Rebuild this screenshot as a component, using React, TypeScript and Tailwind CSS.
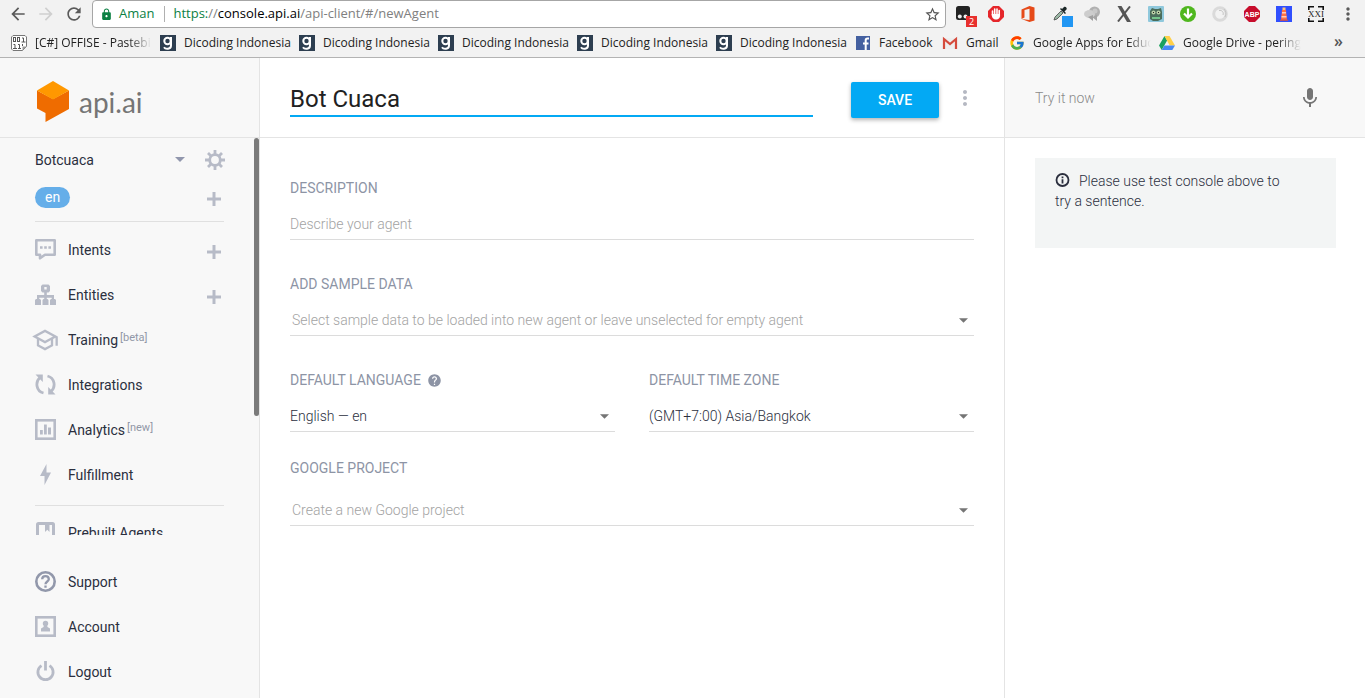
import React, { useState } from 'react';
import { FcGoogle } from 'react-icons/fc';
import {
  MdArrowBack,
  MdArrowForward,
  MdHelp,
  MdLock,
  MdMic,
  MdMoreVert,
  MdOutlineSchool,
  MdRefresh,
  MdStarBorder,
} from 'react-icons/md';

/* Browser icons */

const PastebinIcon = () => (
  <svg viewBox="0 0 16 16" className="size-4 shrink-0">
    <path d="M2 .5h12l1.500 1.500v9.500l-4 4H2L.5 14V2z" fill="#fff" stroke="#777" />
    <path d="M11.500 15.500v-4h4z" fill="#999" />
    <g fill="none" stroke="#555">
      <rect x="2.500" y="2.500" width="2" height="4" />
      <rect x="6.500" y="2.500" width="2" height="4" />
      <path d="M11 3h1.500v4M10.500 7h4M2.500 9.500H4V13M2 13.500h4M7 9.500h1.500V13M7 13.500h3M11.500 9v2" />
    </g>
  </svg>
);

const DicodingIcon = () => (
  <svg viewBox="0 0 16 16" className="size-4 shrink-0">
    <path d="M0 0h16v16H0z" fill="#2d3e50" />
    <circle cx="7.500" cy="6" r="3.200" fill="none" stroke="#fff" strokeWidth="2" />
    <path d="M11 2v8.500c0 4-5.500 4.200-7 1.700" fill="none" stroke="#fff" strokeWidth="2" />
  </svg>
);

const FacebookIcon = () => (
  <svg viewBox="0 0 16 16" className="size-4 shrink-0">
    <path d="M1 1h14v14H1z" fill="#4460a0" />
    <path d="M14 3.500h-1.500c-1.200 0-1.800.6-1.800 1.800V15M8 8.500h5.500" fill="none" stroke="#fff" strokeWidth="2" />
  </svg>
);

const GmailIcon = () => (
  <svg viewBox="0 0 16 16" className="size-4 shrink-0">
    <path d="M1 3h14v11H1z" fill="#eee" />
    <path d="M2 14V4l6 5 6-5v10" fill="none" stroke="#d54b3d" strokeWidth="2.200" />
  </svg>
);

const DriveIcon = () => (
  <svg viewBox="0 0 16 16" className="size-4 shrink-0">
    <path d="M5.500 1 0 10.500 2.700 15l5.400-9.500z" fill="#1aa15f" />
    <path d="M5.500 1h5L16 10.500h-5.300z" fill="#ffcf48" />
    <path d="M5.400 10.500H16L13.300 15H2.700z" fill="#4688f4" />
  </svg>
);

const extensions = [
  {
    name: 'Tampermonkey',
    icon: (
      <>
        <rect width="14" height="14" rx="2.500" fill="#222" />
        <circle cx="3.800" cy="10.500" r="2" fill="#eee" />
        <circle cx="9.500" cy="10.500" r="2" fill="#eee" />
      </>
    ),
  },
  {
    name: 'Opera blocker',
    icon: (
      <>
        <path d="M5 0h6l5 5v6l-5 5H5l-5-5V5z" fill="#e5262b" />
        <path d="M4.500 9V5M6.700 8V3M9 8V3M11.200 9V4.500" stroke="#fff" strokeWidth="1.600" strokeLinecap="round" />
        <path d="M3.700 8h8.300c.5 4-1.500 5.500-4 5.500S3.700 12 3.700 8z" fill="#fff" />
      </>
    ),
  },
  {
    name: 'Office',
    icon: (
      <path d="m1.500 3.500 8-3.500 5 1.500v13L9.500 16l-8-3 8 1V2.800L4.500 4v7.500l-3 1.500z" fill="#e64a19" />
    ),
  },
  {
    name: 'Color picker',
    icon: (
      <>
        <path d="m2 14 1-3 6-6 2 2-6 6z" fill="#9bb8a5" stroke="#444" strokeWidth=".8" />
        <path d="m8 3 5 5 1-1-1.500-1.500 2-2c1-1.500-1-3.500-2.500-2.500l-2 2L9 2z" fill="#1b2727" />
      </>
    ),
  },
  {
    name: 'Chat',
    icon: (
      <>
        <circle cx="10.500" cy="6" r="5.500" fill="#b0b0b0" />
        <path d="M13 9v6l-5-4z" fill="#a6a6a6" />
        <ellipse cx="5.500" cy="8" rx="5.500" ry="4" fill="#cdcdcd" />
        <path d="m4 11 5 4V9z" fill="#a0a0a0" />
        <circle cx="11" cy="5" r="2.500" fill="#c8c8c8" />
      </>
    ),
  },
  {
    name: 'X',
    icon: (
      <>
        <path d="M1.500 0h4L15 16h-4z" fill="#555" />
        <path d="M14 .5 2 15.500" stroke="#555" strokeWidth="2" />
      </>
    ),
  },
  {
    name: 'Owl',
    icon: (
      <>
        <rect width="16" height="16" rx="1" fill="#8fc8dc" />
        <path d="M2 13V5l2-3 3 1h3l3-1 1 4v7l-4 2H5z" fill="#4b6d5b" />
        <circle cx="5.500" cy="6.500" r="2" fill="#b9cfa5" />
        <circle cx="10.500" cy="6.500" r="2" fill="#b9cfa5" />
        <path d="M4 11h8v2H4z" fill="#75c58c" />
        <path d="M5 6h1v1H5zM10 6h1v1h-1z" fill="#222" />
      </>
    ),
  },
  {
    name: 'Download',
    icon: (
      <>
        <circle cx="8" cy="8" r="8" fill="#4fb71e" />
        <path d="M8 2.500V11M4 7.500l4 4 4-4" fill="none" stroke="#fff" strokeWidth="2.200" />
      </>
    ),
  },
  {
    name: 'Disc',
    icon: (
      <>
        <circle cx="8" cy="8" r="6.300" fill="none" stroke="#dadada" strokeWidth="3" />
        <path d="M7 4.500c3-.5 5 1.500 4 4.500M12 3c2 2 2.500 5 1 8" fill="none" stroke="#c4c4c4" />
      </>
    ),
  },
  {
    name: 'Adblock Plus',
    icon: (
      <>
        <path d="M5 0h6l5 5v6l-5 5H5l-5-5V5z" fill="#c70d2c" />
        <text x="8" y="11" textAnchor="middle" fill="#fff" className="font-['Liberation_Sans'] text-[7px] font-bold">
          ABP
        </text>
      </>
    ),
  },
  {
    name: 'Lighthouse',
    icon: (
      <>
        <path d="M0 0h16v16H0z" fill="#304ffe" />
        <path d="M6 4h4l1 10H5z" fill="#ff7043" />
        <path d="M6 6h4v1.500H6zM5.500 10h5v1.500h-5z" fill="#ffccbc" />
        <path d="M6.500 1.500h3V4h-3z" fill="#ffc47c" />
        <path d="M4 13.500h8V15H4z" fill="#b75265" />
      </>
    ),
  },
  {
    name: 'XXI',
    icon: (
      <>
        <path d="M6 .8H.8V4M10 .8h5.200V4M.8 12v3.200H6M15.200 12v3.200H10" fill="none" stroke="#111" strokeWidth="1.600" />
        <text x="8" y="11" textAnchor="middle" fill="#222" className="font-['Liberation_Serif'] text-[9px]">
          XXI
        </text>
      </>
    ),
  },
];

const bookmarks = [
  { label: '[C#] OFFISE - Pastebi', icon: <PastebinIcon />, width: 'w-[117px]', fade: true },
  { label: 'Dicoding Indonesia', icon: <DicodingIcon />, width: 'w-[107px]' },
  { label: 'Dicoding Indonesia', icon: <DicodingIcon />, width: 'w-[107px]' },
  { label: 'Dicoding Indonesia', icon: <DicodingIcon />, width: 'w-[107px]' },
  { label: 'Dicoding Indonesia', icon: <DicodingIcon />, width: 'w-[107px]' },
  { label: 'Dicoding Indonesia', icon: <DicodingIcon />, width: 'w-[107px]' },
  { label: 'Facebook', icon: <FacebookIcon />, width: 'w-[55px]' },
  { label: 'Gmail', icon: <GmailIcon />, width: 'w-[35px]' },
  { label: 'Google Apps for Educ', icon: <FcGoogle className="size-4 shrink-0" />, width: 'w-[118px]', fade: true },
  { label: 'Google Drive - pering', icon: <DriveIcon />, width: 'w-[118px]', fade: true },
];

/* Sidebar icons */

const IntentsIcon = () => (
  <svg viewBox="0 0 21 21" className="h-[21px] w-[21px]" fill="none" stroke="currentColor" strokeWidth="2.600">
    <path d="M1.300 1.300h18.400v14.400H10l-5 3.600v-3.600H1.300z" strokeLinejoin="round" />
    <path d="M5 8.500h2.600M9.200 8.500h2.600M13.400 8.500H16" />
  </svg>
);

const EntitiesIcon = () => (
  <svg viewBox="0 0 21 21" className="h-[21px] w-[21px]" fill="currentColor">
    <path fillRule="evenodd" d="M7.500.5h6L15 2v5l-1.500 1.500h-6L6 7V2zM9.300 3v2.500h2.400V3z" />
    <path d="M9.200 8h2.600v8H9.200zM2 11h17v5h-2.300v-2.300H4.300V16H2z" />
    <path d="M1 15h4l1 1v5H0v-5zM8.500 15h4l1 1v5h-6v-5zM16 15h4l1 1v5h-6v-5z" />
  </svg>
);

const IntegrationsIcon = () => (
  <svg viewBox="0 0 21 21" className="h-[21px] w-[21px]" fill="none" stroke="currentColor" strokeWidth="2.800">
    <path d="M8.500 19C1 17 0 8 5 3.500M12.500 2C20 4 21 13 16 17.500" />
    <path d="M.5.500h7.300V8zM20.500 20.500h-7.300V13z" fill="currentColor" stroke="none" />
  </svg>
);

const AnalyticsIcon = () => (
  <svg viewBox="0 0 21 21" className="h-[21px] w-[21px]" fill="currentColor">
    <rect x="1.300" y="1.300" width="18.400" height="18.400" fill="none" stroke="currentColor" strokeWidth="2.600" />
    <path d="M5 11h2.800v4.500H5zM9 5.500h2.800v10H9zM13 8.500h3v7h-3z" />
  </svg>
);

const FulfillmentIcon = () => (
  <svg viewBox="0 0 21 21" className="h-[21px] w-[21px]" fill="currentColor">
    <path d="M11.500 0 5 12h4.500v9L16 8.500h-4.500z" />
  </svg>
);

const PrebuiltIcon = () => (
  <svg viewBox="0 0 21 21" className="h-[21px] w-[21px]" fill="currentColor">
    <rect x="2.500" y="1.500" width="16" height="18" rx="1" fill="none" stroke="currentColor" strokeWidth="3" />
    <path d="M10 2h4.500v8l-2.200-2.200L10 10z" />
  </svg>
);

const SupportIcon = () => (
  <svg viewBox="0 0 21 21" className="h-[21px] w-[21px] text-[#9298ab]" fill="none" stroke="currentColor">
    <circle cx="10.500" cy="10.500" r="9.200" strokeWidth="2.600" />
    <path d="M7.200 8.300c0-4.300 6.600-4.300 6.600 0 0 2.200-3.300 2.300-3.300 4.900M10.500 14.500v2.200" strokeWidth="2.300" />
  </svg>
);

const AccountIcon = () => (
  <svg viewBox="0 0 21 21" className="h-[21px] w-[21px]" fill="currentColor">
    <rect x="1.300" y="1.300" width="18.400" height="18.400" fill="none" stroke="currentColor" strokeWidth="2.600" />
    <circle cx="10.500" cy="7.500" r="2.700" />
    <path d="M9 9h3l.5 2 2.500 1.500v3H6v-3L8.500 11z" />
  </svg>
);

const LogoutIcon = () => (
  <svg viewBox="0 0 21 21" className="h-[21px] w-[21px]" fill="none" stroke="currentColor" strokeWidth="2.800">
    <path d="M10.500 0v9.500M6.500 4.600a7.600 7.600 0 1 0 8 0" />
  </svg>
);

const GearIcon = () => (
  <svg viewBox="-10 -10 20 20" className="size-5" fill="none" stroke="currentColor">
    <circle r="5.300" strokeWidth="2.800" />
    <path
      d="M0-10v4M0 10V6M-10 0h4M10 0H6M-7-7l3 3M7 7 4 4M-7 7l3-3M7-7 4-4"
      strokeWidth="2.800"
    />
  </svg>
);

const InfoIcon = () => (
  <svg viewBox="0 0 16 16" className="mr-2 inline size-4 align-text-bottom" fill="none" stroke="currentColor">
    <circle cx="7.500" cy="7" r="6" strokeWidth="1.800" />
    <path d="M7.500 3.500v1.700M7.500 6.300v4.200" strokeWidth="1.800" />
  </svg>
);

const PlusIcon = () => (
  <svg viewBox="0 0 14 14" className="size-3.5">
    <path d="M7 0v14M0 7h14" stroke="currentColor" strokeWidth="3" />
  </svg>
);

const Caret = ({ className }: { className: string }) => (
  <svg viewBox="0 0 10 5" className={className}>
    <path d="M0 0h10L5 5z" fill="currentColor" />
  </svg>
);

const navItems = [
  { name: 'Intents', icon: <IntentsIcon />, add: true },
  { name: 'Entities', icon: <EntitiesIcon />, add: true },
  { name: 'Training', icon: <MdOutlineSchool className="-ml-0.5 size-7 shrink-0" />, tag: '[beta]' },
  { name: 'Integrations', icon: <IntegrationsIcon /> },
  { name: 'Analytics', icon: <AnalyticsIcon />, tag: '[new]' },
  { name: 'Fulfillment', icon: <FulfillmentIcon /> },
];

const footerItems = [
  { name: 'Support', icon: <SupportIcon /> },
  { name: 'Account', icon: <AccountIcon /> },
  { name: 'Logout', icon: <LogoutIcon /> },
];

interface NavLinkProps {
  name: string;
  icon: React.ReactNode;
  tag?: string;
}

function NavLink({ name, icon, tag }: NavLinkProps) {
  return (
    <a href="#/" className="flex items-center gap-3">
      <span className="flex w-[21px] justify-center text-[#b7bbc7]">{icon}</span>
      <span className="flex">
        {name}
        {tag && <span className="ml-0.5 text-[11px] text-[#9197a7]">{tag}</span>}
      </span>
    </a>
  );
}

function AddButton({ label }: { label: string }) {
  return (
    <button aria-label={label} className="flex w-5 justify-center pt-1 text-[#b7bbc7]">
      <PlusIcon />
    </button>
  );
}

function BrowserBar() {
  return (
    <header className="border-b border-[#b3b3b3] bg-[#f2f2f2] font-['Open_Sans',sans-serif] text-xs text-[#222]">
      <div className="flex h-7 items-center pr-[9px] pl-2">
        <div className="flex gap-2 text-[#5a5a5a]">
          <button aria-label="Back"><MdArrowBack className="size-5" /></button>
          <button aria-label="Forward" className="text-[#cfcfcf]"><MdArrowForward className="size-5" /></button>
          <button aria-label="Reload"><MdRefresh className="size-5" /></button>
        </div>
        <div className="ml-2 flex h-7 flex-1 items-center rounded-sm border border-[#a6a6a6] bg-white pr-1 pl-[7px] text-[13px]">
          <MdLock className="size-[13px] text-[#0b8043]" />
          <span className="ml-[6px] text-[#0b8043]">Aman</span>
          <span className="mr-2 ml-[10px] h-4 w-px bg-[#b0b0b0]" />
          <div role="textbox" aria-label="Address" className="flex-1 whitespace-nowrap text-[#808080]">
            <span className="text-[#0b8043]">https:</span>//<span className="text-black">console.api.ai</span>
            /api-client/#/newAgent
          </div>
          <button aria-label="Bookmark this page" className="text-[#555]"><MdStarBorder className="size-[17px]" /></button>
        </div>
        <div className="ml-[10px] flex items-center gap-4">
          {extensions.map(({ name, icon }) => (
            <button key={name} aria-label={name} className="relative size-4">
              <svg viewBox="0 0 16 16" className="size-4">{icon}</svg>
              {name === 'Tampermonkey' && (
                <span className="absolute top-[10px] left-[10px] flex h-[11px] w-[11px] items-center justify-center bg-[#e8302e] text-[9px] leading-none text-white">
                  2
                </span>
              )}
              {name === 'Color picker' && (
                <span className="absolute top-[10px] left-[10px] h-[11px] w-[11px] bg-[#2196f3]" />
              )}
            </button>
          ))}
          <button aria-label="Menu" className="flex size-4 items-center justify-center text-[#5a5a5a]">
            <MdMoreVert className="size-5 shrink-0" />
          </button>
        </div>
      </div>
      <nav className="flex h-[29px] items-center gap-2 pr-[22px] pl-[11px]">
        {bookmarks.map(({ label, icon, width, fade }, i) => (
          <a key={i} href="#/" className="flex items-center gap-2">
            {icon}
            <span
              className={`whitespace-nowrap ${width} ${
                fade ? '[mask-image:linear-gradient(to_right,black_80%,transparent)]' : ''
              }`}
            >
              {label}
            </span>
          </a>
        ))}
        <button aria-label="More bookmarks" className="ml-auto pb-1 text-base leading-none font-semibold text-[#555]">»</button>
      </nav>
    </header>
  );
}

function Sidebar() {
  return (
    <aside className="flex w-[260px] shrink-0 flex-col border-r border-[#e4e4e4] bg-[#f8f8f8]">
      <div className="flex h-20 shrink-0 items-center gap-[10px] border-b border-[#e4e4e4] pt-2 pl-[37px]">
        <svg viewBox="0 0 32 41" className="h-[41px] w-8">
          <path d="M0 9.500 16 18l16-8.500V28L8.500 41v-9L0 27.500z" fill="#ef6c00" />
          <path d="m16 0 16 9.500L16 18.500 0 9.500z" fill="#ff9800" />
        </svg>
        <span className="font-['Lato',sans-serif] text-[28px] leading-8 text-[#757575]">api.ai</span>
      </div>

      <div className="relative min-h-0 flex-1 overflow-hidden px-[35px]">
        <div className="-mr-px flex h-[43px] items-center">
          <span className="flex-1">Botcuaca</span>
          <button aria-label="Switch agent" className="text-[#9197ad]"><Caret className="h-[5px] w-[10px]" /></button>
          <button aria-label="Agent settings" className="ml-5 text-[#b7bbc7]"><GearIcon /></button>
        </div>
        <div className="flex h-8 items-center justify-between">
          <span className="rounded-full bg-[#65aee9] px-[10px] leading-[21px] text-white">en</span>
          <AddButton label="Add language" />
        </div>
        <nav className="mt-2 border-t border-[#e0e0e0] pt-[5px]">
          {navItems.map(({ add, ...item }) => (
            <div key={item.name} className="flex h-[45px] items-center justify-between">
              <NavLink {...item} />
              {add && <AddButton label={`Add ${item.name}`} />}
            </div>
          ))}
        </nav>
        <div className="mt-2 flex border-t border-[#e0e0e0] pt-4">
          <NavLink name="Prebuilt Agents" icon={<PrebuiltIcon />} />
        </div>
        <div className="absolute top-0 right-0 h-[70%] w-[5px] rounded-full bg-[#7b7b7b]" />
      </div>

      <nav className="shrink-0 pt-6 pb-1">
        {footerItems.map((item) => (
          <div key={item.name} className="flex h-[45px] items-center px-[35px]">
            <NavLink {...item} />
          </div>
        ))}
      </nav>
    </aside>
  );
}

interface SelectFieldProps {
  id: string;
  label: string;
  option: string;
  placeholder?: boolean;
  help?: boolean;
  className?: string;
}

function SelectField({ id, label, option, placeholder, help, className = '' }: SelectFieldProps) {
  return (
    <div className={className}>
      <div className="flex items-center gap-[6px] text-[#8d94a5]">
        <label htmlFor={id}>{label}</label>
        {help && <MdHelp className="size-[15px]" />}
      </div>
      <div className="relative mt-[10px]">
        <select
          id={id}
          className={`h-8 w-full appearance-none border-b border-[#dcdcdc] bg-transparent font-light ${
            placeholder ? 'px-0.5 text-[#a3a3a3]' : 'text-[#2b2f3e]'
          }`}
        >
          <option>{option}</option>
        </select>
        <Caret className="pointer-events-none absolute top-[14px] right-[6px] h-[5px] w-[9px] text-[#757575]" />
      </div>
    </div>
  );
}

function App() {
  const [agentName, setAgentName] = useState('Bot Cuaca');
  const [description, setDescription] = useState('');

  return (
    <div className="flex h-screen flex-col bg-white font-['Roboto',sans-serif] text-sm text-[#2b2f3e]">
      <BrowserBar />

      <div className="flex min-h-0 flex-1">
        <Sidebar />

        {/* Agent form */}
        <main className="min-w-0 flex-1">
          <div className="flex h-20 items-center border-b border-[#e4e4e4] pt-1 pr-[27px] pl-[30px]">
            <input
              aria-label="Agent name"
              value={agentName}
              onChange={(e) => setAgentName(e.target.value)}
              className="h-[34px] min-w-0 flex-1 border-b-2 border-[#03a9f4] text-2xl text-[#212121] outline-none"
            />
            <button className="ml-[38px] h-9 w-[88px] rounded-xs bg-[#03a9f4] font-medium text-white shadow-[0_2px_4px_rgba(0,0,0,0.3)]">
              SAVE
            </button>
            <button aria-label="More options" className="ml-[14px] pb-1 text-[#b5b8c2]">
              <MdMoreVert className="size-6" />
            </button>
          </div>

          <form className="px-[30px] pt-10">
            <label htmlFor="description" className="block text-[#8d94a5]">DESCRIPTION</label>
            <input
              id="description"
              value={description}
              onChange={(e) => setDescription(e.target.value)}
              placeholder="Describe your agent"
              className="mt-[10px] h-8 w-full border-b border-[#dcdcdc] font-light outline-none placeholder:text-[#a3a3a3]"
            />

            <SelectField
              id="sample"
              label="ADD SAMPLE DATA"
              option="Select sample data to be loaded into new agent or leave unselected for empty agent"
              placeholder
              className="mt-[34px]"
            />

            <div className="mt-[34px] grid grid-cols-2 gap-[34px]">
              <SelectField id="language" label="DEFAULT LANGUAGE" option="English — en" help />
              <SelectField id="timezone" label="DEFAULT TIME ZONE" option="(GMT+7:00) Asia/Bangkok" />
            </div>

            <SelectField
              id="project"
              label="GOOGLE PROJECT"
              option="Create a new Google project"
              placeholder
              className="mt-[26px] flex flex-col gap-[6px]"
            />
          </form>
        </main>

        {/* Test console */}
        <aside className="w-[361px] shrink-0 border-l border-[#e4e4e4]">
          <div className="flex h-20 items-center border-b border-[#e4e4e4] bg-[#f8f8f8] pr-[43px] pl-[30px]">
            <input
              aria-label="Try it now"
              placeholder="Try it now"
              className="h-8 min-w-0 flex-1 font-light outline-none placeholder:text-[#8a8a8a]"
            />
            <button aria-label="Speak" className="text-[#757575]"><MdMic className="size-6" /></button>
          </div>
          <div className="mt-5 mr-[29px] ml-[30px] h-[90px] bg-[#f3f5f5] pt-[13px] pr-10 pl-5 font-light">
            <InfoIcon />
            Please use test console above to try a sentence.
          </div>
        </aside>
      </div>
    </div>
  );
}

export default App;
